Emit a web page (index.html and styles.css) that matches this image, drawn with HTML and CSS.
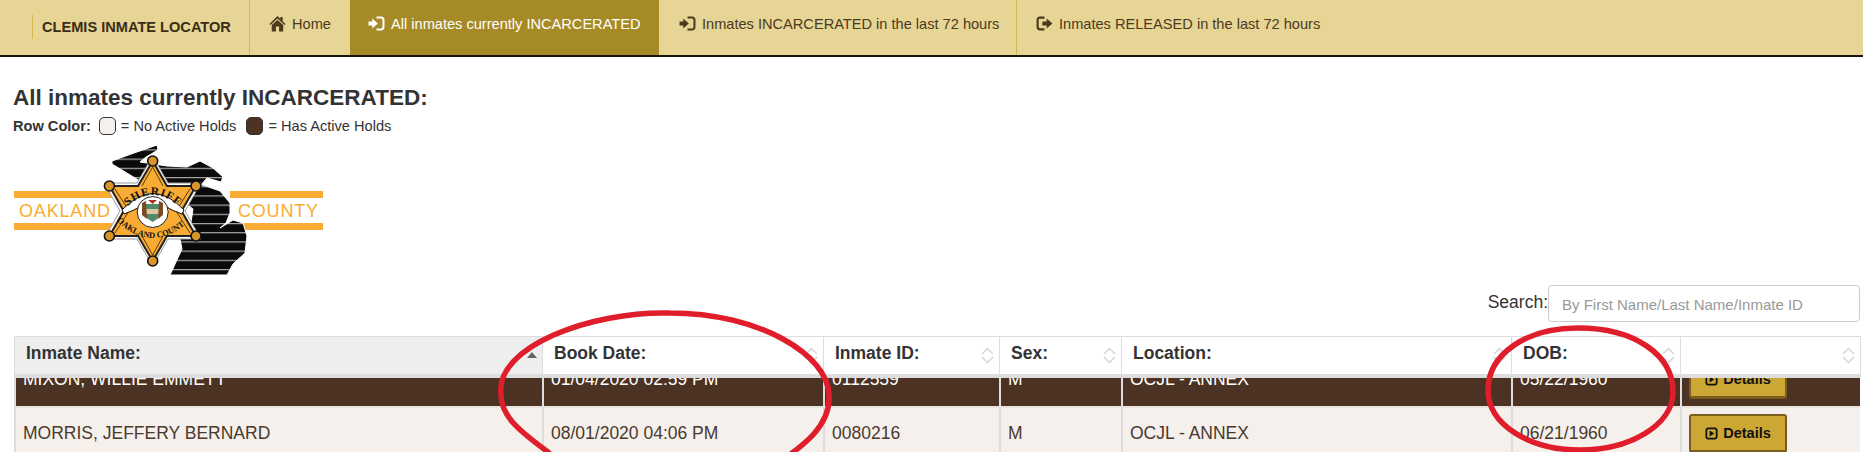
FILE: index.html
```html
<!DOCTYPE html>
<html lang="en">
<head>
<meta charset="utf-8">
<title>CLEMIS Inmate Locator</title>
<link rel="stylesheet" href="styles.css">
</head>
<body>
<svg class="defs" width="0" height="0" aria-hidden="true">
  <symbol id="i-home" viewBox="0 0 16 16"><path d="M8 1 0.4 8.4 1.4 9.5 8 3.3 14.6 9.5 15.6 8.4 12.9 5.8V1.8H10.7V3.7 Z M8 4.6 2.6 9.5V15.5H6.5V10.8H9.5V15.5H13.4V9.5Z"/></symbol>
  <symbol id="i-in" viewBox="0 0 16 16"><path d="M0.5 6.2H4V3.2L9.2 8 4 12.8V9.8H0.5Z"/><path d="M8 1.5H12.5C14.2 1.5 15.5 2.8 15.5 4.5V11.5C15.5 13.2 14.2 14.5 12.5 14.5H8V12.6H12.2C13 12.6 13.6 12 13.6 11.2V4.8C13.6 4 13 3.4 12.2 3.4H8Z"/></symbol>
  <symbol id="i-out" viewBox="0 0 16 16"><path d="M8 1.5H3.5C1.8 1.5 0.5 2.8 0.5 4.5V11.5C0.5 13.2 1.8 14.5 3.5 14.5H8V12.4H3.8C3 12.4 2.5 11.9 2.5 11.1V4.9C2.5 4.1 3 3.6 3.8 3.6H8Z"/><path d="M6 6.2H10V3.4L15.5 8 10 12.6V9.8H6Z"/></symbol>
  <symbol id="i-play" viewBox="0 0 14 14"><path fill-rule="evenodd" d="M3.5 0.5H10.5C12.2 0.5 13.5 1.8 13.5 3.5V10.5C13.5 12.2 12.2 13.5 10.5 13.5H3.5C1.8 13.5 0.5 12.2 0.5 10.5V3.5C0.5 1.8 1.8 0.5 3.5 0.5ZM3.8 2.4C3 2.4 2.4 3 2.4 3.8V10.2C2.4 11 3 11.6 3.8 11.6H10.2C11 11.6 11.6 11 11.6 10.2V3.8C11.6 3 11 2.4 10.2 2.4ZM5 3.8 10 7 5 10.2Z"/></symbol>
  <symbol id="i-sort" viewBox="0 0 13 17"><path d="M1 7 6.5 1.5 12 7M1 10 6.5 15.5 12 10" fill="none" stroke="#d6d6d6" stroke-width="1.5"/></symbol>
</svg>

<nav class="nav">
  <div class="brand"><span class="brand-text">CLEMIS INMATE LOCATOR</span></div>
  <a class="tab tab-home"><svg class="ico"><use href="#i-home"/></svg>Home</a>
  <a class="tab tab-active"><svg class="ico"><use href="#i-in"/></svg>All inmates currently INCARCERATED</a>
  <a class="tab tab-in"><svg class="ico"><use href="#i-in"/></svg>Inmates INCARCERATED in the last 72 hours</a>
  <a class="tab tab-out"><svg class="ico"><use href="#i-out"/></svg>Inmates RELEASED in the last 72 hours</a>
</nav>

<main class="main">
  <h3 class="title">All inmates currently INCARCERATED:</h3>
  <div class="legend">
    <b>Row Color:</b>
    <span class="swatch swatch-light"></span><span>= No Active Holds</span>
    <span class="swatch swatch-dark"></span><span>= Has Active Holds</span>
  </div>

  <svg class="logo" width="320" height="135" viewBox="0 0 320 135" role="img" aria-label="Oakland County Sheriff">
    <defs>
      <pattern id="stripes" width="10" height="9.2" patternUnits="userSpaceOnUse" y="3">
        <rect width="10" height="9.2" fill="#0a0a0a"/>
        <rect width="10" height="1" y="7.5" fill="#c9c9c9"/>
      </pattern>
      <path id="arcTop" d="M128 205Q153 183 178 205"/>
      <path id="arcBot" d="M119 222Q153 252 187 222"/>
    </defs>
    <g transform="translate(-13,-145)">
      <rect x="14" y="190" width="309" height="7" fill="#f9ac33"/>
      <rect x="14" y="222" width="309" height="7" fill="#f9ac33"/>
      <rect x="125" y="186" width="105" height="48" fill="#fff"/>
      <text class="logo-word" x="19" y="216" textLength="91">OAKLAND</text>
      <text class="logo-word" x="238" y="216" textLength="80">COUNTY</text>
      <path d="M112 160 134 152 157 144 158 149 146 156 140 161 167 165 187 166 200 160 213 167 223 176 221 181 207 177 200 185 203 184 220 190 230 202 230 212 226 222 220 227 233 219 243 222 247 235 245 252 233 263 227 274 170 274 182 248 180 238 190 228 193 208 170 190 140 180 112 163Z" fill="url(#stripes)" stroke="#fff" stroke-width="1"/>
      <polygon points="152.7,155 168,182 201,182 185,210 201,238 168,238 152.7,265 137,238 104,238 120,210 104,182 137,182" fill="#fff" stroke="#999" stroke-width="1"/>
      <polygon points="152.7,160 167,185 196,185 181.5,210 196,235 167,235 152.7,260 138,235 109.4,235 123.7,210 109.4,185 138,185" fill="#f9ac33" stroke="#222" stroke-width="2"/>
      <path d="M152.7 166 142 185M152.7 166 163 185M115 188 129 210 115 232M190 188 176 210 190 232M152.7 254 142 235M152.7 254 163 235" fill="none" stroke="#5a3d10" stroke-width="1"/>
      <g fill="#d8962a" stroke="#111" stroke-width="1.6">
        <circle cx="152.7" cy="160" r="5"/><circle cx="196" cy="185" r="5"/><circle cx="196" cy="235" r="5"/>
        <circle cx="152.7" cy="260" r="5"/><circle cx="109.4" cy="235" r="5"/><circle cx="109.4" cy="185" r="5"/>
      </g>
      <path d="M122 209Q153 176 184 209L182 213 172 209Q153 194 134 209L124 213Z" fill="#fff" stroke="#111" stroke-width="1"/>
      <circle cx="152.7" cy="211" r="15.5" fill="#fff" stroke="#222" stroke-width="1"/>
      <path d="M145 203 160 203 160 216 152.7 221 145 216Z" fill="#4f8a6a"/>
      <path d="M145 208 160 208 160 213 145 213Z" fill="#d8c9a0"/>
      <path d="M142 202 146 200 147 218 142 214ZM163 202 159 200 158 218 163 214Z" fill="#7a4a22"/>
      <path d="M148 199 157 199 152.7 203Z" fill="#b0322a"/>
      <text class="logo-arc logo-arc-top"><textPath href="#arcTop" startOffset="50%">SHERIFF</textPath></text>
      <text class="logo-arc logo-arc-bot"><textPath href="#arcBot" startOffset="50%">OAKLAND COUNTY</textPath></text>
    </g>
  </svg>

  <div class="search-row">
    <label class="search-label" for="q">Search:</label>
    <input class="search-input" id="q" type="text" placeholder="By First Name/Last Name/Inmate ID">
  </div>

  <table class="grid grid-head">
    <colgroup><col class="c1"><col class="c2"><col class="c3"><col class="c4"><col class="c5"><col class="c6"><col class="c7"></colgroup>
    <thead>
      <tr>
        <th class="th-active"><div class="th-in">Inmate Name:<span class="sort-up"></span></div></th>
        <th><div class="th-in">Book Date:<svg class="sort"><use href="#i-sort"/></svg></div></th>
        <th><div class="th-in">Inmate ID:<svg class="sort"><use href="#i-sort"/></svg></div></th>
        <th><div class="th-in">Sex:<svg class="sort"><use href="#i-sort"/></svg></div></th>
        <th><div class="th-in">Location:<svg class="sort"><use href="#i-sort"/></svg></div></th>
        <th><div class="th-in">DOB:<svg class="sort"><use href="#i-sort"/></svg></div></th>
        <th><div class="th-in"><span></span><svg class="sort"><use href="#i-sort"/></svg></div></th>
      </tr>
    </thead>
  </table>
  <div class="grid-scroll">
    <table class="grid grid-body">
      <colgroup><col class="c1"><col class="c2"><col class="c3"><col class="c4"><col class="c5"><col class="c6"><col class="c7"></colgroup>
      <tbody>
        <tr class="row-dark">
          <td>MIXON, WILLIE EMMETT</td><td>01/04/2020 02:59 PM</td><td>0112559</td><td>M</td><td>OCJL - ANNEX</td><td>05/22/1960</td>
          <td><button class="btn"><svg class="btn-ico"><use href="#i-play"/></svg>Details</button></td>
        </tr>
        <tr class="row-light">
          <td>MORRIS, JEFFERY BERNARD</td><td>08/01/2020 04:06 PM</td><td>0080216</td><td>M</td><td>OCJL - ANNEX</td><td>06/21/1960</td>
          <td><button class="btn"><svg class="btn-ico"><use href="#i-play"/></svg>Details</button></td>
        </tr>
      </tbody>
    </table>
  </div>
</main>

<svg class="marks" width="1863" height="452" viewBox="0 0 1863 452" aria-hidden="true">
  <path d="M670 313C760 313 828 355 829 395C831 425 805 445 775 465C690 490 570 480 548 452C518 430 500 415 501 393C496 347 590 311 670 313Z"/>
  <path d="M1578 328C1635 328 1673 355 1673 392C1673 425 1630 450 1580 450C1530 450 1488 425 1488 390C1488 355 1525 328 1578 328Z"/>
</svg>
</body>
</html>
```

FILE: styles.css
```css
html, body {
  margin: 0;
  height: 452px;
  overflow: hidden;
  background: #fff;
}
body {
  position: relative;
  font-family: "Liberation Sans", Arial, sans-serif;
  color: #333;
}
.defs { position: absolute; }

/* nav */
.nav {
  display: flex;
  height: 55px;
  background: #e6d595;
  border-bottom: 2px solid #1b1708;
  font-size: 14.6px;
  color: #4d3a1e;
}
.brand {
  width: 217px;
  padding-left: 32px;
  display: flex;
  align-items: center;
  border-right: 1px solid #d4b84e;
}
.brand-text {
  display: block;
  padding: 6px 0 5px 9px;
  margin-top: -2px;
  border-left: 1px solid #d4b84e;
  font-weight: 700;
  color: #3a2d17;
  line-height: 13px;
}
.tab {
  display: flex;
  align-items: center;
  padding-bottom: 8px;
  box-sizing: border-box;
}
.ico {
  width: 17px;
  height: 17px;
  margin-right: 6px;
  fill: currentColor;
}
.tab-home { width: 100px; padding-left: 19px; }
.tab-active { width: 309px; padding-left: 18px; background: #a68a26; color: #fff; }
.tab-in { width: 358px; padding-left: 20px; border-right: 1px solid #d4b84e; }
.tab-out { padding-left: 19px; }

/* heading */
.main { padding: 0 3px 0 13px; }
.title {
  margin: 0;
  padding-top: 27px;
  font-size: 22.5px;
  line-height: 27px;
  font-weight: 700;
  color: #333;
}
.legend {
  display: flex;
  align-items: center;
  height: 18px;
  margin-top: 6px;
  font-size: 14.6px;
  color: #333;
}
.legend b { margin-right: 8px; }
.swatch {
  width: 15px;
  height: 16px;
  margin-right: 5px;
  border: 1px solid #333;
  border-radius: 5px;
}
.swatch-light { background: #f5f0ec; }
.swatch-dark { background: #4c3222; margin-left: 10px; }

/* logo */
.logo { display: block; margin-top: 11px; }
.logo-word {
  font-size: 18px;
  fill: #f9ac33;
}
.logo-arc {
  font-family: "Liberation Serif", serif;
  font-weight: 700;
  fill: #111;
  text-anchor: middle;
}
.logo-arc-top { font-size: 11.5px; letter-spacing: 1px; }
.logo-arc-bot { font-size: 8.5px; }

/* search */
.search-row {
  display: flex;
  justify-content: flex-end;
  align-items: flex-start;
  margin-top: 4px;
}
.search-label {
  font-size: 17.5px;
  line-height: 34px;
}
.search-input {
  box-sizing: border-box;
  width: 312px;
  height: 37px;
  padding: 2px 13px 0;
  border: 1px solid #ccc;
  border-radius: 4px;
  font: 15px "Liberation Sans", Arial, sans-serif;
  color: #555;
}
.search-input::placeholder { color: #999; opacity: 1; }

/* table */
.grid {
  table-layout: fixed;
  width: 1847px;
  border-collapse: separate;
  border-spacing: 0;
  margin-left: 1px;
  font-size: 17.5px;
}
.c1 { width: 528px; }
.c2 { width: 281px; }
.c3 { width: 176px; }
.c4 { width: 122px; }
.c5 { width: 390px; }
.c6 { width: 169px; }
.c7 { width: 181px; }

.grid-head { margin-top: 14px; }
.grid-head th {
  height: 37px;
  padding: 0;
  background: #fff;
  border-top: 1px solid #ddd;
  border-left: 1px solid #ddd;
  border-bottom: 4px solid #ddd;
  box-sizing: content-box;
  font-weight: 700;
  text-align: left;
  color: #333;
}
.grid-head th:last-child { border-right: 1px solid #ddd; }
.grid-head th.th-active { background: #eee; }
.th-in {
  display: flex;
  justify-content: space-between;
  align-items: center;
  padding: 0 5px 0 11px;
  height: 33px;
  margin-top: -4px;
}
.sort { width: 13px; height: 17px; margin-top: 4px; }
.sort-up {
  width: 0;
  height: 0;
  margin-top: 2px;
  border-left: 5px solid transparent;
  border-right: 5px solid transparent;
  border-bottom: 6px solid #666;
}

.grid-scroll {
  height: 75px;
  overflow: hidden;
}
.grid-body { margin-top: -24px; }
.grid-body td {
  padding: 6px 0 7px 7px;
  height: 39px;
  border-left: 2px solid #ddd;
  border-bottom: 2px solid #e8e4e0;
  vertical-align: middle;
  box-sizing: content-box;
}
.row-dark td { background: #4c3222; color: #fff; }
.row-light td { background: #f5f0ec; color: #4a3a2c; }

.btn {
  display: flex;
  align-items: center;
  justify-content: center;
  box-sizing: border-box;
  width: 98px;
  height: 39px;
  margin-left: 0;
  padding: 0;
  background: #cda733;
  border: 2px solid #7a5c1c;
  border-bottom-width: 3px;
  border-radius: 3px;
  font: 700 14.5px "Liberation Sans", Arial, sans-serif;
  color: #111;
}
.btn-ico { width: 13px; height: 13px; margin-right: 5px; fill: #111; }

/* hand-drawn annotation over the screenshot */
.marks {
  position: absolute;
  left: 0;
  top: 0;
  pointer-events: none;
}
.marks path {
  fill: none;
  stroke: #e01e2b;
  stroke-width: 5.5;
}
```
